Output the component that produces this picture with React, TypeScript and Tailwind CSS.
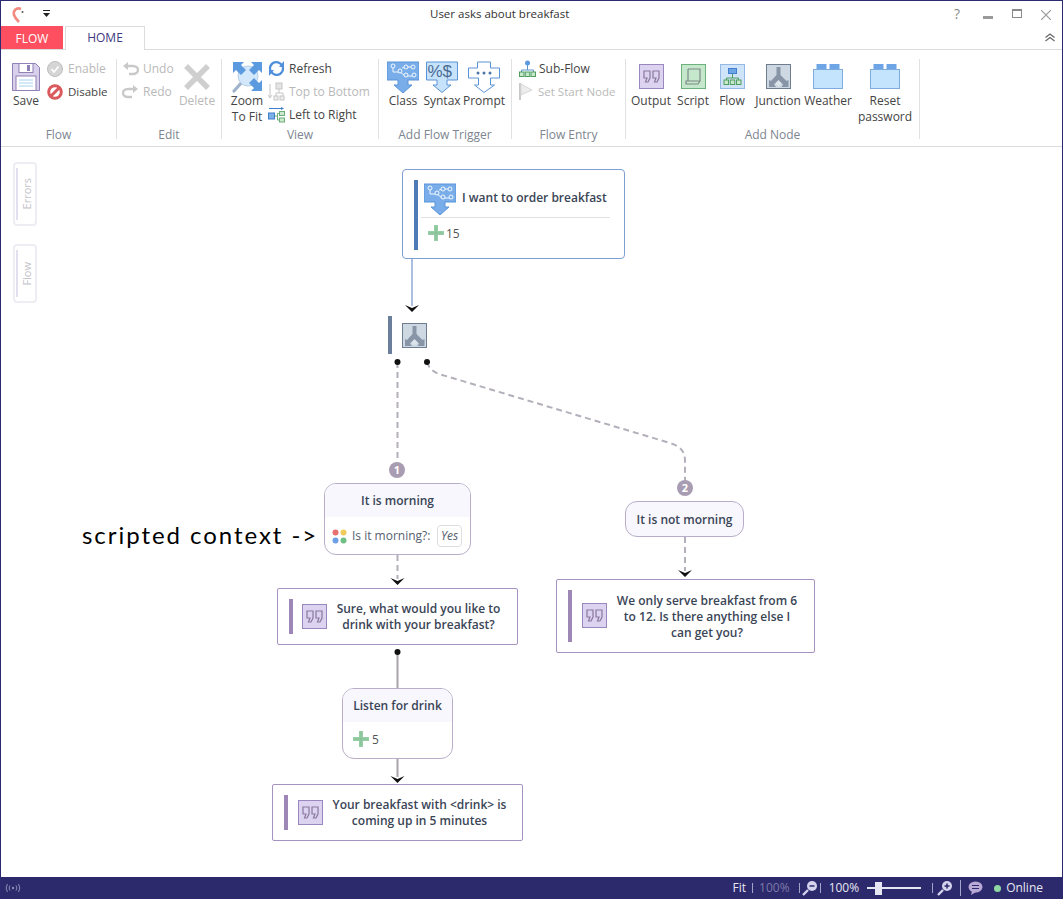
import React from "react";

const Icon = ({ w, h, children }: { w: number; h: number; children: React.ReactNode }) => (
    <svg width={w} height={h} viewBox={`0 0 ${w} ${h}`} className="block shrink-0">{children}</svg>
);

const SaveIcon = () => (
    <Icon w={28} h={30}>
        <path d="M.5 1.5h23l4 4v23H.5z" fill="#d9d0ec" stroke="#8f80b5" />
        <rect x="7" y="1.5" width="14" height="9" fill="#fff" stroke="#8f80b5" />
        <rect x="15" y="3" width="3" height="6" fill="#8f80b5" />
        <rect x="4" y="14" width="20" height="14.5" fill="#fff" stroke="#8f80b5" />
        <path d="M7 18h14M7 21h14M7 24h14" stroke="#a8d2ef" />
    </Icon>
);
const EnableIcon = () => (
    <Icon w={16} h={16}>
        <circle cx="8" cy="8" r="7.5" fill="#d5d5d5" stroke="#bdbdbd" />
        <path d="M4.5 8l2.5 3 4.5-5.5" fill="none" stroke="#fff" strokeWidth="1.6" />
    </Icon>
);
const DisableIcon = () => (
    <Icon w={16} h={16}>
        <circle cx="8" cy="8" r="6.3" fill="#fff" stroke="#d9595c" strokeWidth="3" />
        <path d="M3.5 12.5l9-9" stroke="#d9595c" strokeWidth="3" />
    </Icon>
);
const UndoIcon = ({ flip }: { flip?: boolean }) => (
    <Icon w={17} h={14}>
        <g transform={flip ? "translate(17 0) scale(-1 1)" : undefined}>
            <path d="M1 4l5-4v8z" fill="#c9c9c9" />
            <path d="M5 4h6c3 0 5 2 5 4s-2 4-5 4H7" fill="none" stroke="#c9c9c9" strokeWidth="2.4" />
        </g>
    </Icon>
);
const DeleteIcon = () => (
    <Icon w={28} h={28}>
        <path d="M3 3l22 22M25 3L3 25" stroke="#cfcfcf" strokeWidth="5.5" />
    </Icon>
);
const ZoomFitIcon = () => {
    const arrow = "M0 0h11L8 3l5 5-5 5-5-5-3 3z";
    return (
        <Icon w={31} h={32}>
            <path d="M11 20L2 30" stroke="#9fb4cb" strokeWidth="3.2" strokeLinecap="round" />
            <circle cx="16" cy="15" r="10" fill="#d3e8fb" stroke="#b3cce6" />
            <path d={arrow} fill="#5c9ae0" transform="translate(1 1)" />
            <path d={arrow} fill="#5c9ae0" transform="translate(30 1) scale(-1 1)" />
            <path d={arrow} fill="#5c9ae0" transform="translate(30 30) scale(-1 -1)" />
        </Icon>
    );
};
const RefreshIcon = () => (
    <Icon w={17} h={17}>
        <path d="M14 5.5C12.5 2.5 8 1 5 3S1.500 8 2.500 11" fill="none" stroke="#4f8fdc" strokeWidth="2.2" />
        <path d="M3 11.500C4.500 14.500 9 16 12 14s3.500-5 2.500-8" fill="none" stroke="#4f8fdc" strokeWidth="2.2" />
        <path d="M16 1v6h-5zM1 16v-6h5z" fill="#4f8fdc" />
    </Icon>
);
const TopBottomIcon = () => (
    <Icon w={17} h={19}>
        <path d="M2 2v14M0 13l2 3 2-3M11 7v4M8 14v-3h7v3" fill="none" stroke="#c6c6c6" />
        <rect x="8" y="1" width="6" height="6" fill="#e4e4e4" stroke="#c6c6c6" />
        <rect x="6" y="14" width="4" height="4" fill="#eee" stroke="#c6c6c6" />
        <rect x="12" y="14" width="4" height="4" fill="#eee" stroke="#c6c6c6" />
    </Icon>
);
const LeftRightIcon = () => (
    <Icon w={17} h={16}>
        <path d="M1 1.500h13" stroke="#3f7fce" />
        <path d="M13 0l3 1.500-3 1.500z" fill="#3f7fce" />
        <rect x=".5" y="6" width="6" height="6" fill="#7eb0e8" stroke="#3f7fce" />
        <rect x="11.500" y="4.500" width="5" height="4" fill="#cbe8cf" stroke="#6cae79" />
        <rect x="11.500" y="11" width="5" height="4" fill="#cbe8cf" stroke="#6cae79" />
        <path d="M7 9h2.500M9.500 6.500V13h2M9.500 6.500h2" fill="none" stroke="#6cae79" />
    </Icon>
);
const ClassIcon = () => (
    <Icon w={32} h={32}>
        <path d="M0 1h32v18H21v5h4l-9 8-9-8h4v-5H0z" fill="#78ade9" stroke="#5b93d8" />
        <g fill="#78ade9" stroke="#fff" strokeWidth=".9">
            <path d="M6 5v6h6M12 10l6 5h8M19 6h6M15 7l4-1" fill="none" />
            <circle cx="6" cy="5" r="2" /><circle cx="13" cy="10" r="2" /><circle cx="19" cy="6" r="2" /><circle cx="19" cy="14" r="2" /><circle cx="27" cy="14" r="2" /><circle cx="26" cy="6" r="2" />
        </g>
    </Icon>
);
const SyntaxIcon = () => (
    <Icon w={32} h={32}>
        <path d="M.5 1h31v18H21v5h4l-9 7.500L7 24h4v-5H.5z" fill="#c6e3fb" stroke="#5b93d8" />
        <text x="1.500" y="16" fontSize="17" fill="#4b6b94" fontFamily="Liberation Sans, sans-serif">%$</text>
    </Icon>
);
const PromptIcon = () => (
    <Icon w={32} h={32}>
        <path d="M.5 7h9V1h13v6h9v10h-9v7h4L16 31.500 6.500 24h4v-7h-10z" fill="#fff" stroke="#5b93d8" />
        <circle cx="10" cy="12" r="1.500" fill="#4f74a8" /><circle cx="16" cy="12" r="1.500" fill="#4f74a8" /><circle cx="22" cy="12" r="1.500" fill="#4f74a8" />
    </Icon>
);
const SubFlowIcon = () => (
    <Icon w={17} h={17}>
        <circle cx="8.500" cy="3" r="2.500" fill="#5c9ae0" />
        <path d="M8.500 5v5M2.500 12v-2h12v2" fill="none" stroke="#5c93c8" />
        <rect x=".5" y="12" width="4.500" height="4.500" fill="#c8e8cc" stroke="#4f9e60" />
        <rect x="6.250" y="12" width="4.500" height="4.500" fill="#c8e8cc" stroke="#4f9e60" />
        <rect x="12" y="12" width="4.500" height="4.500" fill="#c8e8cc" stroke="#4f9e60" />
    </Icon>
);
const FlagIcon = () => (
    <Icon w={14} h={17}>
        <path d="M1 0v17" stroke="#c8c8c8" strokeWidth="2" />
        <path d="M2 1l11 6-11 5z" fill="#ececec" stroke="#d8d8d8" />
    </Icon>
);
const QuoteIcon = () => (
    <Icon w={25} h={25}>
        <rect x=".5" y=".5" width="24" height="24" fill="#dcd3f0" stroke="#9b87bf" />
        <path d="M5 7h6v7l-2 4H6.500l1.500-4H5zM14 7h6v7l-2 4h-2.500l1.500-4h-3z" fill="none" stroke="#8a789f" strokeWidth="1.200" />
    </Icon>
);
const ScriptIcon = () => (
    <Icon w={25} h={25}>
        <rect x=".5" y=".5" width="24" height="24" fill="#c5e7cb" stroke="#6db17c" />
        <path d="M7 5h12v12H5v3h12l2-3M7 5v12" fill="none" stroke="#7c8a86" strokeWidth="1.200" />
    </Icon>
);
const FlowIcon = () => (
    <Icon w={25} h={25}>
        <rect x=".5" y=".5" width="24" height="24" fill="#cfe3f9" stroke="#94b9e6" />
        <rect x="8.500" y="4.500" width="8" height="5" fill="#6ea5e6" stroke="#3f7fce" />
        <path d="M12.500 10v4M6.500 16v-2h12v2" fill="none" stroke="#4f9e60" />
        <rect x="4" y="16" width="4.500" height="4.500" fill="#c8e8cc" stroke="#4f9e60" />
        <rect x="10.250" y="16" width="4.500" height="4.500" fill="#c8e8cc" stroke="#4f9e60" />
        <rect x="16.500" y="16" width="4.500" height="4.500" fill="#c8e8cc" stroke="#4f9e60" />
    </Icon>
);
const JunctionIcon = () => (
    <Icon w={25} h={25}>
        <rect x=".5" y=".5" width="24" height="24" fill="#cdd8e3" stroke="#6f7d90" />
        <path d="M10.500 3h4v8l6 6 2-1v7h-7l1.500-2.500-4.500-4.500-4.500 4.500L10 23H3v-7l2 1 5.500-6z" fill="#8795a6" />
        <path d="M12.500 16.500l3 3-3 3-3-3z" fill="#dde5ec" />
    </Icon>
);
const LegoIcon = () => (
    <Icon w={30} h={25}>
        <rect x="4" y=".5" width="9" height="5" fill="#6ea5e6" stroke="#6ea5e6" />
        <rect x="17" y=".5" width="9" height="5" fill="#6ea5e6" stroke="#6ea5e6" />
        <rect x=".5" y="5.500" width="29" height="19" fill="#c3e4fc" stroke="#7eacdf" />
    </Icon>
);
const PlusIcon = () => (
    <Icon w={16} h={16}>
        <path d="M6 0h4v6h6v4h-6v6H6v-6H0V6h6z" fill="#98cea6" />
        <path d="M8 1v14M1 8h14" stroke="#7ab58a" strokeWidth=".6" />
    </Icon>
);
const DotsIcon = () => (
    <Icon w={15} h={15}>
        <circle cx="3.500" cy="3.500" r="3" fill="#e8716f" />
        <circle cx="11.500" cy="3.500" r="3" fill="#eecb5b" />
        <circle cx="3.500" cy="11.500" r="3" fill="#6c9fe6" />
        <circle cx="11.500" cy="11.500" r="3" fill="#6fbf85" />
    </Icon>
);
const MagIcon = ({ plus }: { plus?: boolean }) => (
    <Icon w={16} h={16}>
        <circle cx="10" cy="6" r="5" fill="#d4d2ec" />
        <path d="M6 10l-5 5" stroke="#d4d2ec" strokeWidth="2.400" />
        <path d={plus ? "M7.500 6h5M10 3.500v5" : "M7.500 6h5"} stroke="#2c2a6c" strokeWidth="1.500" />
    </Icon>
);

const Big = ({ icon, label, className }: { icon: React.ReactNode; label: React.ReactNode; className: string }) => (
    <div className={`flex flex-col items-center mt-[1px] ${className}`}>
        <div className="h-[33px] flex items-center justify-center">{icon}</div>
        <div className="text-center leading-4 whitespace-nowrap">{label}</div>
    </div>
);

const Small = ({ icon, label, off, iconW = "w-[21px]", labelClass = "" }: { icon: React.ReactNode; label: string; off?: boolean; iconW?: string; labelClass?: string }) => (
    <div className={`flex items-center h-[19px] whitespace-nowrap ${off ? "text-[#b9b9b9]" : ""}`}>
        <div className={`${iconW} shrink-0`}>{icon}</div>
        <span className={labelClass}>{label}</span>
    </div>
);

const Group = ({ label, className, children }: { label: string; className: string; children: React.ReactNode }) => (
    <div className={`flex flex-col h-[80px] border-r border-[#e1e1e1] shrink-0 ${className}`}>
        <div className="flex h-[68px] shrink-0 items-start">{children}</div>
        <div className="h-4 shrink-0 leading-4 text-center text-[#7d8590]">{label}</div>
    </div>
);

const Arrow = ({ x, y }: { x: number; y: number }) => (
    <path d={`M${x - 7} ${y}L${x} ${y + 7}L${x + 7} ${y}L${x} ${y + 3}z`} fill="#111" />
);

const Bar = ({ className }: { className: string }) => <div className={`absolute w-1 ${className}`} />;

const Tag = ({ className, label }: { className: string; label: string }) => (
    <div className={`absolute left-[12px] w-[24px] rounded border-2 border-[#ededf4] flex items-center justify-center ${className}`}>
        <div className="absolute left-[1px] top-1 bottom-1 w-[2px] bg-[#e2e0ee]" />
        <span className="[writing-mode:vertical-rl] rotate-180 text-[11px] text-[#c3c3c9] ml-1">{label}</span>
    </div>
);

const Badge = ({ className, n }: { className: string; n: string }) => (
    <div className={`absolute w-4 h-4 rounded-full bg-[#a89cb2] text-white text-[11px] font-bold leading-4 text-center ${className}`}>{n}</div>
);

export default function App() {
    return (
        <div className="w-[1063px] h-[899px] flex flex-col bg-white border-x border-t border-[#2c2a72] font-['Open_Sans','Noto_Sans',sans-serif] text-[12px] text-[#444] overflow-hidden">
            {/* title bar */}
            <div className="h-[25px] shrink-0 flex items-center relative">
                <svg width="14" height="16" viewBox="0 0 14 16" className="ml-[11px] mt-[2px]">
                    <path d="M9 2C4 0 1 4 2 8c1 3 3 5 5 7" fill="none" stroke="#f28a80" strokeWidth="2.600" />
                    <circle cx="10.500" cy="5" r="1" fill="#555" />
                </svg>
                <svg width="9" height="8" viewBox="0 0 9 8" className="ml-[16px]">
                    <path d="M1 .5h7" stroke="#222" />
                    <path d="M1 3h7L4.500 7z" fill="#222" />
                </svg>
                <div className="absolute left-[429px] top-[5px] text-[11.500px] leading-4 text-[#333] whitespace-nowrap">User asks about breakfast</div>
                <div className="absolute right-0 top-0 h-[25px] flex items-center text-[#8a8a8a]">
                    <span className="absolute right-[102px] text-[14px]">?</span>
                    <div className="absolute right-[69px] top-[15px] w-[10px] h-[3px] bg-[#9a9a9a]" />
                    <div className="absolute right-[40px] top-[8px] w-[10px] h-[9px] border border-[#8a8a8a] border-t-[2px]" />
                    <svg width="10" height="10" viewBox="0 0 10 10" className="absolute right-[11px] top-[9px]">
                        <path d="M0 0l10 10M10 0L0 10" stroke="#9a9a9a" strokeWidth="1.200" />
                    </svg>
                </div>
            </div>
            {/* tabs */}
            <div className="h-[24px] shrink-0 flex border-b border-[#dcdcdc] relative">
                <div className="w-[62px] h-[23px] bg-[#fd4f5f] text-white text-center leading-[25px]">FLOW</div>
                <div className="ml-[2px] w-[80px] h-[24px] bg-white border-x border-t border-[#dcdcdc] text-center leading-[22px] text-[#3d3a80]">HOME</div>
                <svg width="12" height="9" viewBox="0 0 12 9" className="absolute right-[6px] top-[7px]">
                    <path d="M1.500 4.500l4.500-3.500 4.500 3.500M1.500 8l4.500-3.500 4.500 3.500" fill="none" stroke="#666" strokeWidth="1.200" />
                </svg>
            </div>
            {/* ribbon */}
            <div className="h-[97px] shrink-0 flex items-start pt-[9px] border-b border-[#dcdcdc]">
                <Group label="Flow" className="w-[116px]">
                    <Big icon={<SaveIcon />} label="Save" className="w-[38px] ml-[6px]" />
                    <div className="ml-[2px] flex flex-col gap-[4px]">
                        <Small icon={<EnableIcon />} label="Enable" off />
                        <Small icon={<DisableIcon />} label="Disable" labelClass="text-[11.500px]" />
                    </div>
                </Group>
                <Group label="Edit" className="w-[105px]">
                    <div className="ml-[5px] w-[57px] flex flex-col gap-[4px]">
                        <Small icon={<UndoIcon />} label="Undo" off />
                        <Small icon={<UndoIcon flip />} label="Redo" off />
                    </div>
                    <div className="text-[#b9b9b9]">
                        <Big icon={<DeleteIcon />} label="Delete" className="w-[36px]" />
                    </div>
                </Group>
                <Group label="View" className="w-[157px]">
                    <Big icon={<ZoomFitIcon />} label={<>Zoom<br />To Fit</>} className="w-[40px] ml-[5px]" />
                    <div className="ml-[1px] flex flex-col gap-[4px]">
                        <Small icon={<RefreshIcon />} label="Refresh" />
                        <Small icon={<TopBottomIcon />} label="Top to Bottom" off />
                        <Small icon={<LeftRightIcon />} label="Left to Right" />
                    </div>
                </Group>
                <Group label="Add Flow Trigger" className="w-[133px]">
                    <Big icon={<ClassIcon />} label="Class" className="w-[38px] ml-[5px]" />
                    <Big icon={<SyntaxIcon />} label="Syntax" className="w-[38px] ml-[1px]" />
                    <Big icon={<PromptIcon />} label="Prompt" className="w-[44px] ml-[1px]" />
                </Group>
                <Group label="Flow Entry" className="w-[114px]">
                    <div className="ml-[7px] flex flex-col gap-[4px]">
                        <Small icon={<SubFlowIcon />} label="Sub-Flow" iconW="w-[20px]" />
                        <Small icon={<FlagIcon />} label="Set Start Node" off iconW="w-[19px]" labelClass="text-[11.500px]" />
                    </div>
                </Group>
                <Group label="Add Node" className="w-[294px]">
                    <Big icon={<QuoteIcon />} label="Output" className="w-[40px] ml-[5px]" />
                    <Big icon={<ScriptIcon />} label="Script" className="w-[40px] ml-[2px]" />
                    <Big icon={<FlowIcon />} label="Flow" className="w-[38px]" />
                    <Big icon={<JunctionIcon />} label="Junction" className="w-[54px]" />
                    <Big icon={<LegoIcon />} label="Weather" className="w-[46px]" />
                    <Big icon={<LegoIcon />} label={<>Reset<br />password</>} className="w-[68px]" />
                </Group>
            </div>
            {/* canvas: offsets below are relative to y=147, x=1 */}
            <div className="relative flex-1 bg-white text-[#3a4556]">
                <svg width="1061" height="730" viewBox="1 147 1061 730" className="absolute left-0 top-0">
                    <path d="M412 259V306" stroke="#8eaad8" strokeWidth="1.500" fill="none" />
                    <Arrow x={412} y={305} />
                    <path d="M397.500 362V462" stroke="#b4afba" strokeWidth="2" strokeDasharray="6 4" fill="none" />
                    <path d="M427 362c2 6 5 9 12 12L670 443c10 3 15 8 15 18V481" stroke="#b4afba" strokeWidth="2" strokeDasharray="6 4" fill="none" />
                    <circle cx="397.500" cy="362" r="3" fill="#111" />
                    <circle cx="427" cy="362" r="3" fill="#111" />
                    <path d="M397.500 555V579" stroke="#b4afba" strokeWidth="2" strokeDasharray="6 4" fill="none" />
                    <Arrow x={397.5} y={578} />
                    <path d="M685 537V571" stroke="#b4afba" strokeWidth="2" strokeDasharray="6 4" fill="none" />
                    <Arrow x={685} y={570} />
                    <path d="M397.500 652V688M397.500 759V777" stroke="#a8a4aa" strokeWidth="2" fill="none" />
                    <circle cx="397.500" cy="652" r="3" fill="#111" />
                    <Arrow x={397.5} y={776} />
                </svg>

                <Tag className="top-[15px] h-[64px]" label="Errors" />
                <Tag className="top-[97px] h-[59px]" label="Flow" />

                <div className="absolute left-[81px] top-[373px] font-['Lato',sans-serif] text-[24px] tracking-[1.950px] leading-[30px] text-black whitespace-nowrap">scripted context -&gt;</div>

                {/* trigger */}
                <div className="absolute left-[401px] top-[22px] w-[223px] h-[90px] rounded bg-white border border-[#7d9fd2]">
                    <Bar className="left-[11px] top-[10px] h-[70px] bg-[#4f7ab8]" />
                    <div className="absolute left-[21px] top-[13px]"><ClassIcon /></div>
                    <div className="absolute left-[59px] top-[19px] font-semibold whitespace-nowrap">I want to order breakfast</div>
                    <div className="absolute left-[18px] top-[47px] w-[189px] h-px bg-[#e2e2e2]" />
                    <div className="absolute left-[25px] top-[55px]"><PlusIcon /></div>
                    <div className="absolute left-[43px] top-[55px] text-[#555]">15</div>
                </div>

                {/* junction */}
                <Bar className="left-[387px] top-[169px] h-[38px] bg-[#6b7f9c]" />
                <div className="absolute left-[401px] top-[176px]"><JunctionIcon /></div>

                {/* It is morning */}
                <Badge className="left-[388px] top-[315px]" n="1" />
                <div className="absolute left-[323px] top-[336px] w-[147px] h-[72px] rounded-[12px] bg-white border border-[#b8aec9] overflow-hidden">
                    <div className="h-[33px] bg-[#f7f7fd] text-center font-semibold leading-[33px]">It is morning</div>
                    <div className="flex items-center h-[38px] pl-[7px]">
                        <DotsIcon />
                        <span className="ml-[5px] whitespace-nowrap text-[#566070]">Is it morning?:</span>
                    </div>
                    <div className="absolute left-[112px] top-[41px] w-[25px] h-[22px] border border-[#dedede] rounded text-center italic leading-[20px] text-[#566070]">Yes</div>
                </div>

                {/* output 1 */}
                <div className="absolute left-[276px] top-[441px] w-[241px] h-[57px] rounded-[2px] bg-white border border-[#a692c0]">
                    <Bar className="left-[11px] top-[10px] h-[35px] bg-[#9c87b6]" />
                    <div className="absolute left-[24px] top-[15px]"><QuoteIcon /></div>
                    <div className="absolute left-[50px] right-[8px] top-[12px] text-center font-semibold leading-4">Sure, what would you like to<br />drink with your breakfast?</div>
                </div>

                {/* listen for drink */}
                <div className="absolute left-[341px] top-[541px] w-[111px] h-[71px] rounded-[12px] bg-white border border-[#b8aec9] overflow-hidden">
                    <div className="h-[33px] bg-[#f7f7fd] text-center font-semibold leading-[33px]">Listen for drink</div>
                    <div className="absolute left-[10px] top-[42px]"><PlusIcon /></div>
                    <div className="absolute left-[29px] top-[42px] text-[#555]">5</div>
                </div>

                {/* output 3 */}
                <div className="absolute left-[271px] top-[637px] w-[251px] h-[57px] rounded-[2px] bg-white border border-[#a692c0]">
                    <Bar className="left-[11px] top-[10px] h-[35px] bg-[#9c87b6]" />
                    <div className="absolute left-[25px] top-[15px]"><QuoteIcon /></div>
                    <div className="absolute left-[52px] right-[8px] top-[12px] text-center font-semibold leading-4 whitespace-nowrap">Your breakfast with &lt;drink&gt; is<br />coming up in 5 minutes</div>
                </div>

                {/* It is not morning */}
                <Badge className="left-[676px] top-[333px]" n="2" />
                <div className="absolute left-[624px] top-[354px] w-[119px] h-[36px] rounded-[12px] bg-[#f7f7fd] border border-[#b8aec9] text-center font-semibold leading-[36px]">It is not morning</div>

                {/* output 2 */}
                <div className="absolute left-[555px] top-[432px] w-[259px] h-[74px] rounded-[2px] bg-white border border-[#a692c0]">
                    <Bar className="left-[11px] top-[10px] h-[52px] bg-[#9c87b6]" />
                    <div className="absolute left-[25px] top-[23px]"><QuoteIcon /></div>
                    <div className="absolute left-[48px] right-[5px] top-[13px] text-center font-semibold leading-4">We only serve breakfast from 6<br />to 12. Is there anything else I<br />can get you?</div>
                </div>
            </div>
            {/* status bar */}
            <div className="h-[22px] shrink-0 bg-[#2c2a6c] text-[#e6e6f2] relative flex items-center">
                <svg width="16" height="10" viewBox="0 0 16 10" className="ml-[4px]">
                    <circle cx="8" cy="5" r="1.200" fill="#8d8bb8" />
                    <path d="M5 2.500a4 4 0 000 5M11 2.500a4 4 0 010 5M2.500 1a7 7 0 000 8M13.500 1a7 7 0 010 8" fill="none" stroke="#8d8bb8" />
                </svg>
                <div className="ml-auto flex items-center whitespace-nowrap">
                    <span>Fit</span>
                    <div className="ml-[6px] w-px h-[10px] bg-[#a4a3c8]" />
                    <span className="ml-[6px] text-[#7b79a8]">100%</span>
                    <div className="ml-[9px] w-px h-[10px] bg-[#a4a3c8]" />
                    <div className="ml-[2px]"><MagIcon /></div>
                    <div className="ml-[2px] w-px h-[10px] bg-[#a4a3c8]" />
                    <span className="ml-[8px]">100%</span>
                    <div className="ml-[8px] w-[54px] h-[13px] relative flex items-center">
                        <div className="w-full h-[2px] bg-[#e6e6f2]" />
                        <div className="absolute left-[8px] top-0 w-[7px] h-[13px] bg-[#e6e6f2]" />
                    </div>
                    <div className="ml-[11px] w-px h-[10px] bg-[#a4a3c8]" />
                    <div className="ml-[4px]"><MagIcon plus /></div>
                    <div className="ml-[7px] w-px h-[16px] bg-[#a4a3c8]" />
                    <svg width="15" height="14" viewBox="0 0 15 14" className="ml-[7px]">
                        <ellipse cx="7.500" cy="6" rx="7" ry="5.500" fill="#b9a9d6" />
                        <path d="M4 10l-1 4 5-3z" fill="#b9a9d6" />
                        <path d="M4 4.500h7M4 7.500h7" stroke="#2c2a6c" />
                    </svg>
                    <div className="ml-[11px] w-[7px] h-[7px] rounded-full bg-[#8fd8a4]" />
                    <span className="ml-[5px] mr-[19px]">Online</span>
                </div>
            </div>
        </div>
    );
}
